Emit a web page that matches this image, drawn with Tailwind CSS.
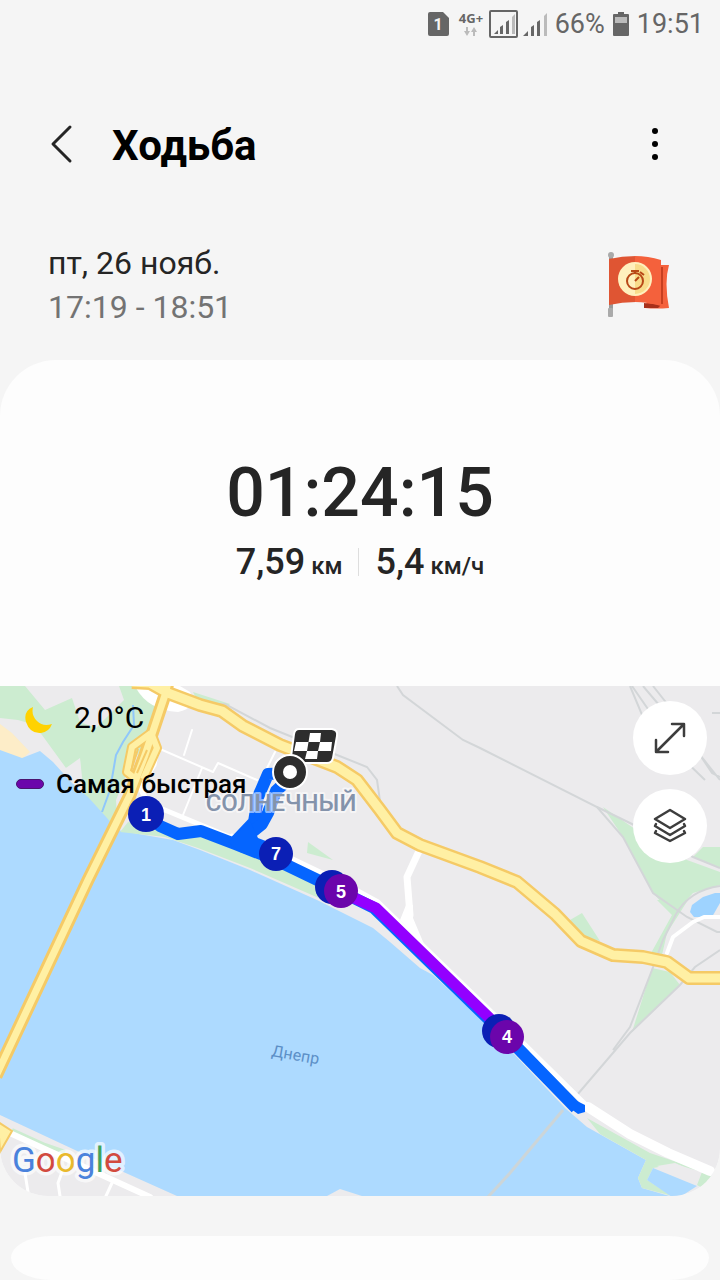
<!DOCTYPE html>
<html lang="ru">
<head>
<meta charset="utf-8">
<meta name="viewport" content="width=device-width, initial-scale=1">
<title>Ходьба</title>
<script src="https://cdn.jsdelivr.net/npm/@tailwindcss/browser@4"></script>
</head>
<body class="min-h-screen bg-[#f5f5f5] font-['Roboto','Noto_Sans',sans-serif] text-[#252525]">
<div class="flex min-h-screen flex-col">

  <!-- Status bar -->
  <div class="flex h-12 items-center justify-end gap-2 pr-4 text-[27px] leading-8 text-[#666]">
    <svg class="h-6 w-[21px]" viewBox="0 0 21 24" aria-hidden="true"><path fill="#666" d="M2 0H15L21 6V22Q21 24 19 24H2Q0 24 0 22V2Q0 0 2 0Z"/><text x="10" y="18" text-anchor="middle" font-size="16" font-weight="700" fill="#f5f5f5">1</text></svg>
    <div class="flex items-center gap-1">
      <svg class="h-7 w-7" viewBox="0 0 28 28" aria-hidden="true"><text x="14" y="13" text-anchor="middle" font-family="Open Sans" font-size="13" font-weight="700" fill="#666">4G+</text><path fill="#bbb" d="M9 17h2v4h2l-3 5-3-5h2zM16 26h2v-4h2l-3-5-3 5h2z"/></svg>
      <svg class="h-7 w-[30px]" viewBox="0 0 30 28" aria-hidden="true"><rect x="1" y="1" width="27" height="26" rx="1" fill="none" stroke="#666" stroke-width="2"/><path fill="#666" d="M5 24l4-4v4zM11 17l3-2v9h-3zM17 12l3-2v14h-3z"/><path fill="#bbb" d="M23 7l3-3v20h-3z"/></svg>
      <svg class="h-7 w-6" viewBox="0 0 24 28" aria-hidden="true"><path fill="#666" d="M0 26l5-5v5zM8 17l3-2v11H8zM14 12l3-2v16h-3z"/><path fill="#bbb" d="M21 6l3-3v23h-3z"/></svg>
    </div>
    <span>66%</span>
    <svg class="h-6 w-4" viewBox="0 0 16 24" aria-hidden="true"><path fill="#666" d="M5 0h6v2h4q1 0 1 1v20q0 1-1 1H1q-1 0-1-1V3q0-1 1-1h4z"/><path fill="#bbb" d="M2 5h12v6H2z"/></svg>
    <span>19:51</span>
  </div>

  <!-- Title bar -->
  <header class="flex h-48 items-center justify-between pr-10 pl-12">
    <div class="flex items-center gap-9">
      <button type="button" aria-label="Назад" class="flex h-12 w-7 items-center"><svg class="h-10 w-7" viewBox="0 0 28 40"><path d="M22 3L5 20L22 37" fill="none" stroke="#252525" stroke-width="3" stroke-linecap="round" stroke-linejoin="round"/></svg></button>
      <h1 class="pt-1 text-[42px] leading-12 font-bold text-black">Ходьба</h1>
    </div>
    <button type="button" aria-label="Ещё" class="flex h-12 w-[50px] items-center justify-center"><svg class="h-9 w-2" viewBox="0 0 8 36"><circle cx="4" cy="5" r="3"/><circle cx="4" cy="18" r="3"/><circle cx="4" cy="31" r="3"/></svg></button>
  </header>

  <!-- Date and goal flag -->
  <section class="flex h-30 items-start justify-between pr-12 pl-12">
    <div class="pt-px text-[32px] leading-11">
      <p>пт, 26 нояб.</p>
      <p class="text-[#737373]">17:19 - 18:51</p>
    </div>
    <svg class="mt-2 h-18 w-16" viewBox="0 0 64 72" role="img" aria-label="Цель">
      <rect x="1" y="6" width="4" height="62" fill="#999"/><circle cx="3" cy="7" r="3" fill="#aaa"/><rect x="0" y="60" width="5" height="9" rx="1" fill="#aaa"/>
      <path fill="#f4613c" d="M50 17H61Q56 34 61 60Q48 61 37 60Z"/><path fill="#c73f20" d="M46 19h9v37h-9z"/>
      <path fill="#a8301a" d="M36 55L53 57L50 60H36Z"/>
      <path fill="#df5533" d="M1 11Q14 8 28 8V54Q14 54 1 57Z"/><path fill="#f4613c" d="M27 8Q40 8 53 12V58Q40 54 27 54Z"/>
      <circle cx="27" cy="31" r="17" fill="#fff0bd"/><path fill="#f8dc8b" d="M27 16a15 15 0 0 1 0 30z"/>
      <g fill="none" stroke="#b84817" stroke-width="2"><circle cx="27" cy="33" r="8"/><path d="M23 23h8M27 24v2M32 24l4 3M27 33l4-4"/></g>
    </svg>
  </section>

  <main class="overflow-hidden rounded-t-[56px] rounded-b-[48px] bg-[#fdfdfd]">
    <section class="flex h-[326px] flex-col items-center pt-[93px]">
      <p class="text-[68px] leading-20 font-medium">01:24:15</p>
      <div class="mt-[7px] flex items-center gap-4 font-medium">
        <p class="flex items-baseline gap-[6px] text-[36px] leading-11">7,59 <span class="text-[24px]">км</span></p>
        <div class="mb-1 h-7 w-px bg-[#dedede]"></div>
        <p class="flex items-baseline gap-[6px] text-[36px] leading-11">5,4 <span class="text-[24px]">км/ч</span></p>
      </div>
    </section>

    <!-- Route map -->
    <section aria-label="Карта маршрута" class="relative flex h-[510px] justify-between overflow-hidden text-black">
      <svg class="absolute inset-0 h-full w-full" viewBox="0 686 720 510" preserveAspectRatio="xMidYMid slice" role="img" aria-label="Карта: Солнечный, Днепр">
        <rect y="686" width="720" height="510" fill="#ecebed"/>
        <!-- Parks and sand -->
        <g fill="#ccecd0">
          <path d="M0 686H25L45 710L72 698L80 722L96 728L124 700L119 686H150L158 706L147 740L128 770L116 800L118 832L82 792L80 760L66 768L42 735L32 724L18 720L0 718Z"/>
          <path d="M193 692L230 704L222 712L198 702Z"/>
          <path d="M308 842L333 860L307 853Z"/>
          <path d="M603 807L632 827L687 860L720 872V885L693 893L673 915L653 893L623 837Z"/>
          <path d="M703 847H720V868L693 857Z"/>
          <path d="M657 900H688L667 933L662 955H650L672 915Z"/>
          <path d="M652 968L670 972L680 985L632 1032Z"/>
          <path d="M570 920L582 913L600 941L583 937Z"/>
        </g>
        <path fill="#fdedc8" d="M0 724L12 733L30 752L22 759L0 751Z"/>
        <path fill="#ecebed" d="M66 768L80 758L84 796L70 782Z"/>
        <!-- Water -->
        <path fill="#addaff" d="M0 750L22 758L40 751L53 762L72 783L88 797L107 818L117 830L133 833L173 840L200 850L250 870L317 900L373 928L390 942L420 968L433 975L480 1018L565 1108L587 1127L637 1155L646 1160L638 1178L642 1188L673 1197H365L340 1189L327 1196H177L90 1157L0 1115Z"/>
        <path fill="#ccecd0" d="M128 822L165 827L230 843L330 885L345 900L328 902L250 868L198 848L165 837L120 832Z"/>
        <path fill="#ccecd0" d="M587 1118L650 1153L712 1174L706 1190L697 1185L702 1172L675 1164L653 1168L647 1180L672 1196L642 1188L638 1178L646 1160L600 1134Z"/>
        <path fill="#ecebed" d="M657 1166L675 1163L700 1174L696 1184Z"/>
        <path fill="#addaff" d="M653 1168L697 1186L680 1197H672L647 1180Z"/>
        <path fill="#9ed3ff" d="M690 912L692 905L703 897L715 893H720V903L712 917H694Z"/>
        <path fill="none" stroke="#ccecd0" stroke-width="4" d="M12 1130L45 1145L65 1152"/>
        <path fill="none" stroke="#8fc7fb" stroke-width="2" d="M133 705L134 725L123 742L116 755L110 790L102 812"/>
        <!-- Railways -->
        <g fill="none" stroke="#d3d6d8" stroke-width="2">
          <path d="M397 686L403 695L463 740L480 748L597 807L623 837L653 893L687 917L717 932H720"/>
          <path d="M597 807L632 824L693 857L720 868"/>
          <path d="M630 686L645 722L705 780M632 686L650 712M643 686L665 712L704 760L720 780M653 686L672 710L700 755L712 773L720 777M712 713H720"/>
          <path d="M190 704H225L270 728L337 755L367 767L377 780L381 808"/>
          <path d="M720 886Q690 890 676 914L663 940L652 970L630 1027L613 1050M720 950L695 967L680 985L630 1033L577 1095"/>
          <path d="M563 1110L510 1173L488 1197" stroke="#ccd5d8" stroke-width="3"/>
        </g>
        <!-- Streets -->
        <g fill="none" stroke="#fff" stroke-linecap="round" stroke-linejoin="round">
          <path stroke-width="2" d="M160 749L213 772L218 763L257 780M202 768L183 815M192 730L184 755M275 752L265 772M237 778L245 780"/>
          <path stroke-width="5" d="M157 750L154 765L140 788L148 803L230 837M232 836L276 851L345 884L378 902L510 1030L585 1104"/>
          <path stroke-width="7" d="M419 851L407 877L410 915"/>
          <path stroke-width="10" d="M588 1107L630 1134L668 1153L710 1171"/>
          <path stroke-width="6" d="M12 1134L82 1166L150 1197"/>
          <path stroke-width="3" d="M25 1173L28 1192M62 1172L58 1183L60 1196M112 1183L106 1196"/>
          <path stroke-width="4" d="M720 917H704L693 922L673 937L667 953"/>
        </g>
        <path fill="#fff" d="M406 905L400 920L424 944L413 918V905Z"/>
        <path fill="#fff" d="M136 688Q148 710 178 712Q198 708 190 692L180 686H138Z"/>
        <!-- Highways -->
        <g fill="none" stroke-linejoin="round">
          <g stroke="#f5ca66">
            <path stroke-width="14" d="M132 682L150 683L168 693L200 705L222 711L243 726L280 745L337 767L357 780L380 810L397 833L420 845L480 867L517 882L555 914L581 941L613 955L643 957L667 962L689 978L720 978"/>
            <path stroke-width="13" d="M-4 1076L88 880L130 795L145 755L165 695L168 682"/>
            <path stroke-width="10" d="M151 733L132 747L127 772L137 780M152 735L157 748L143 779"/>
          </g>
          <g stroke="#fff0a4">
            <path stroke-width="9" d="M132 682L150 683L168 693L200 705L222 711L243 726L280 745L337 767L357 780L380 810L397 833L420 845L480 867L517 882L555 914L581 941L613 955L643 957L667 962L689 978L720 978"/>
            <path stroke-width="7" d="M-4 1076L88 880L130 795L145 755L165 695L168 682"/>
            <path stroke-width="6" d="M151 733L132 747L127 772L137 780M152 735L157 748L143 779"/>
          </g>
          <path stroke="#f5ca66" stroke-width="2" d="M138 749L131 771M147 750L137 773"/>
        </g>
        <path fill="#fff0a4" stroke="#f5ca66" stroke-width="2" d="M-2 1122L12 1131L0 1152Z"/>
        <text transform="translate(271 1056) rotate(10)" font-size="16" fill="#5c8fc7">Днепр</text>
        <!-- Track -->
        <g fill="none" stroke="#0565ff" stroke-width="12" stroke-linejoin="round">
          <path d="M146 814L160 826L178 834L201 831L235 844L276 860L330 886L374 908L506 1036L576 1108"/>
          <path d="M288 773L268 774L258 797L254 822L235 842"/>
          <path d="M290 778L276 791L268 813L262 824L245 838"/>
        </g>
        <path fill="#0565ff" d="M228 842L250 821L258 838L276 845V864L240 852ZM577 1101L585 1105V1112L578 1114L567 1106Z"/>
        <path fill="none" stroke="#9300ff" stroke-width="11" stroke-linejoin="round" d="M341 892L376 908L507 1035"/>
        <!-- District name -->
        <text x="281" y="811" text-anchor="middle" font-size="24" font-weight="500" fill="#8493ab" stroke="#fff" stroke-opacity=".55" stroke-width="4" stroke-linejoin="round" paint-order="stroke">СОЛНЕЧНЫЙ</text>
        <!-- Kilometre markers -->
        <circle cx="146" cy="814" r="18" fill="#0b1fb5"/><circle cx="276" cy="854" r="17" fill="#0b1fb5"/>
        <circle cx="332" cy="887" r="17" fill="#0b1fb5"/><circle cx="341" cy="891" r="17" fill="#6b05ab"/>
        <circle cx="499" cy="1031" r="17" fill="#0b1fb5"/><circle cx="507" cy="1037" r="17" fill="#6b05ab"/>
        <g fill="#fff" font-family="Liberation Sans" font-size="18" font-weight="700" text-anchor="middle">
          <text x="146" y="821">1</text><text x="276" y="860">7</text><text x="341" y="898">5</text><text x="507" y="1043">4</text>
        </g>
        <!-- Finish and start -->
        <path fill="#2d2d2d" stroke="#fff" stroke-width="2" d="M299 729H332Q338 730 337 736L333 758Q332 763 327 763H296Q290 763 291 757L294 734Q295 729 299 729Z"/>
        <path fill="#fff" d="M310 733H321L320 742H308.500ZM296 742H308.500L307 751H294ZM320 742H332L331 751H318ZM307 751H318L317 759H305Z"/>
        <circle cx="290" cy="772" r="17" fill="#2d2d2d" stroke="#fff" stroke-width="2"/><circle cx="290" cy="772" r="7" fill="#fff"/>
        <!-- Map provider -->
        <text x="12" y="1172" font-size="35" font-weight="400" stroke="#fff" stroke-opacity=".65" stroke-width="7" stroke-linejoin="round" paint-order="stroke"><tspan fill="#4a82dc">G</tspan><tspan fill="#d24a3e">o</tspan><tspan fill="#e9b92c">o</tspan><tspan fill="#4a82dc">g</tspan><tspan fill="#3fa35e">l</tspan><tspan fill="#d24a3e">e</tspan></text>
      </svg>

      <div class="relative flex flex-col gap-8 pt-4 pl-4">
        <div class="flex items-center gap-5 pl-2">
          <svg class="h-8 w-[30px]" viewBox="0 0 30 32" aria-hidden="true"><path fill="#ffd200" d="M9 5Q-1 9 2 20Q6 32 17 31Q25 30 28 22Q19 25 13 19Q7 13 9 5Z"/></svg>
          <span class="text-[30px] leading-8">2,0°C</span>
        </div>
        <div class="flex items-center gap-3">
          <span class="h-[10px] w-7 rounded-full border border-[#4a1470] bg-[#6b05ab]"></span>
          <span class="text-[26px] leading-9 font-medium">Самая быстрая</span>
        </div>
      </div>
      <div class="relative flex flex-col gap-[14px] pt-[15px] pr-[13px]">
        <button type="button" aria-label="Развернуть карту" class="flex size-[74px] items-center justify-center rounded-full bg-white"><svg class="size-9" viewBox="0 0 36 36"><path d="M5 31L31 5M20 4H32V16M4 20V32H16" fill="none" stroke="#3d3d3d" stroke-width="2.500" stroke-linecap="round" stroke-linejoin="round"/></svg></button>
        <button type="button" aria-label="Слои карты" class="flex size-[74px] items-center justify-center rounded-full bg-white"><svg class="size-9" viewBox="0 0 36 36"><g fill="none" stroke="#3d3d3d" stroke-width="2.500" stroke-linejoin="round" stroke-linecap="round"><path d="M18 2L33 11L18 20L3 11Z"/><path d="M4 16L3 18L18 27L33 18L32 16M4 23L3 25L18 33L33 25L32 23"/></g></svg></button>
      </div>
    </section>
  </main>

  <section aria-label="Подробности" class="mx-[11px] mt-10 h-11 rounded-[40px/22px] bg-[#fdfdfd]"></section>
</div>
</body>
</html>
